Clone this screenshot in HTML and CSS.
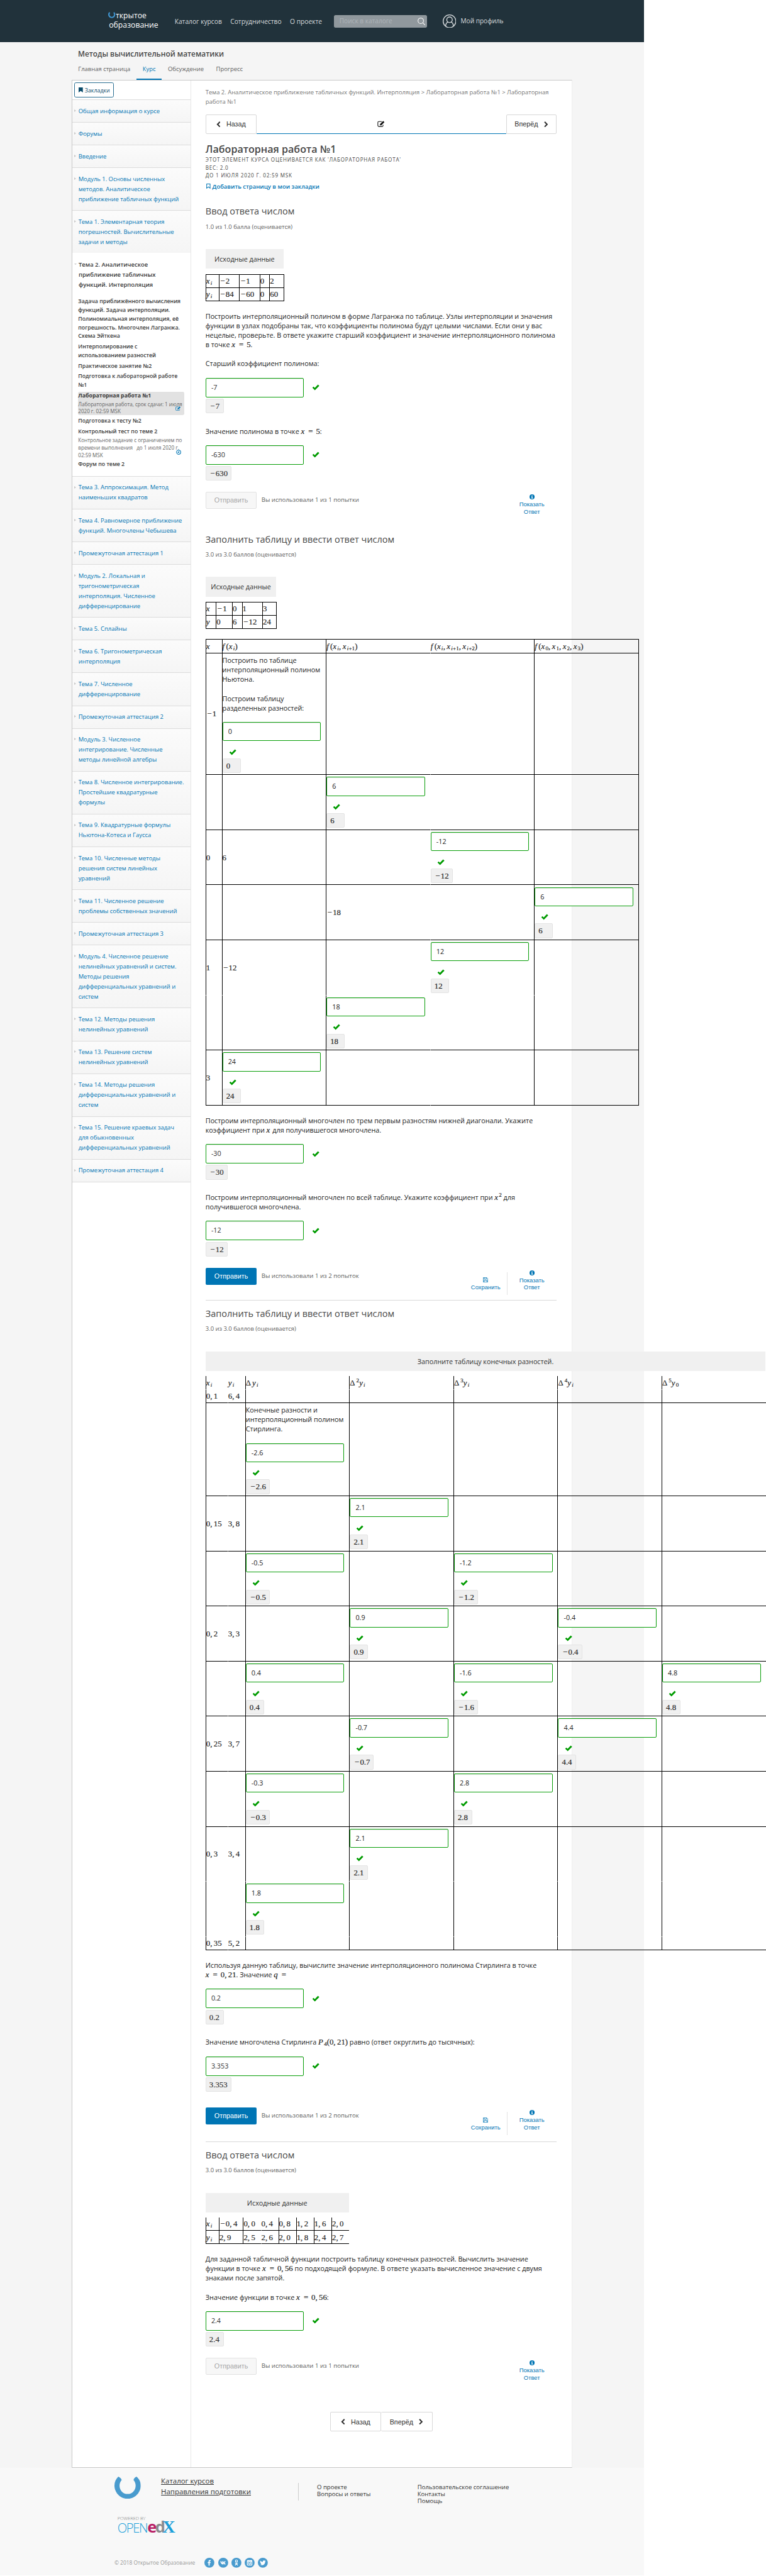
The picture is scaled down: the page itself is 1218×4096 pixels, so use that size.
FILE: index.html
```html
<!DOCTYPE html>
<html lang="ru">
<head>
<meta charset="utf-8">
<title>Лабораторная работа №1</title>
<link rel="stylesheet" href="styles.css">
</head>
<body>
<svg class="defs" width="0" height="0">
<symbol id="check" viewBox="0 0 17 14"><path d="M1 7.6 3.4 5.2 6.4 8 13.4.8 16.4 3.4 6.6 13.4z"/></symbol>
<symbol id="info" viewBox="0 0 12 12"><circle cx="6" cy="6" r="6"/><path fill="#fff" d="M5 1.8h2v1.8H5zM4.2 4.7H7v3.9h.9V10H4.2V8.600H5V6h-.8z"/></symbol>
<symbol id="save" viewBox="0 0 12 12"><path fill="none" stroke="currentColor" stroke-width="1.2" d="M.6.6h8.200l2.600 2.600v8.200H.6zM3 .6v3.600h5V.6M2.800 11.400V7h6.400v4.400"/></symbol>
<symbol id="edit" viewBox="0 0 18 15"><path fill="none" stroke="currentColor" stroke-width="1.600" d="M10.500 1.800H3.500a2.300 2.300 0 0 0-2.300 2.300v7.200a2.300 2.300 0 0 0 2.300 2.300h7.800a2.300 2.300 0 0 0 2.300-2.300V9.500"/><path fill="currentColor" d="M6.500 7.800 13.800.5l2.900 2.900-7.300 7.300H6.500z"/></symbol>
<symbol id="left" viewBox="0 0 10 14"><path fill="none" stroke="currentColor" stroke-width="3" d="M8.500 1.200 2.800 7l5.700 5.800"/></symbol>
<symbol id="right" viewBox="0 0 10 14"><path fill="none" stroke="currentColor" stroke-width="3" d="M1.500 1.200 7.200 7l-5.700 5.800"/></symbol>
<symbol id="horseshoe" viewBox="0 0 62 52"><path d="M9 0C3 6 0 13 0 21c0 17 14 31 31 31s31-14 31-31C62 13 59 6 52 0c-4 2-6 4-7 8 3 3 5 8 5 13 0 11-8 20-19 20s-19-9-19-20c0-5 2-10 5-13-1-4-4-6-8-8z"/></symbol>
</svg>
<div class="page">
<header class="top">
  <a class="logo"><svg class="logo-u"><use href="#horseshoe"/></svg><span class="l1">ткрытое</span><span class="l2">образование</span></a>
  <nav class="menu"><a>Каталог курсов</a><a>Сотрудничество</a><a>О проекте</a></nav>
  <div class="search"><span>Поиск в каталоге</span><svg viewBox="0 0 18 18"><circle cx="7.500" cy="7.500" r="6.500"/><path d="m12 12 5.500 5.500"/></svg></div>
  <div class="profile"><svg viewBox="0 0 32 32"><circle cx="16" cy="16" r="15"/><circle cx="16" cy="12.500" r="6.500"/><path d="M7 27c0-5 3-8.500 6-9.500M25 27c0-5-3-8.500-6-9.500"/></svg><span>Мой профиль</span></div>
</header>
<div class="coursehead">
  <div class="ctitle">Методы вычислительной математики</div>
  <nav class="tabs"><a>Главная страница</a><a class="on">Курс</a><a>Обсуждение</a><a>Прогресс</a></nav>
</div>
<div class="wrap">
<aside class="side">
  <div class="bm"><a><svg viewBox="0 0 10 12"><path d="M0 0h10v12L5 8 0 12z"/></svg>Закладки</a></div>
  <a class="ch">Общая информация о курсе</a>
  <a class="ch">Форумы</a>
  <a class="ch">Введение</a>
  <a class="ch">Модуль 1. Основы численных<br>методов. Аналитическое<br>приближение табличных функций</a>
  <a class="ch">Тема 1. Элементарная теория<br>погрешностей. Вычислительные<br>задачи и методы</a>
  <div class="open">
    <div class="otitle">Тема 2. Аналитическое<br>приближение табличных<br>функций. Интерполяция</div>
    <ul>
      <li>Задача приближённого вычисления<br>функций. Задача интерполяции.<br>Полиномиальная интерполяция, её<br>погрешность. Многочлен Лагранжа.<br>Схема Эйткена</li>
      <li>Интерполирование с<br>использованием разностей</li>
      <li>Практическое занятие №2</li>
      <li>Подготовка к лабораторной работе<br>№1</li>
      <li class="act"><b>Лабораторная работа №1</b><small>Лабораторная работа, срок сдачи: 1 июля<br>2020 г. 02:59 MSK</small><svg class="mark"><use href="#edit"/></svg></li>
      <li>Подготовка к тесту №2</li>
      <li>Контрольный тест по теме 2<small>Контрольное задание с ограничением по<br>времени выполнения &nbsp; до 1 июля 2020 г.<br>02:59 MSK</small><svg class="mark clock" viewBox="0 0 12 12"><circle cx="6" cy="6" r="4.900"/><path d="M6.500 3.500v3H4"/></svg></li>
      <li>Форум по теме 2</li>
    </ul>
  </div>
  <a class="ch">Тема 3. Аппроксимация. Метод<br>наименьших квадратов</a>
  <a class="ch">Тема 4. Равномерное приближение<br>функций. Многочлены Чебышева</a>
  <a class="ch">Промежуточная аттестация 1</a>
  <a class="ch">Модуль 2. Локальная и<br>тригонометрическая<br>интерполяция. Численное<br>дифференцирование</a>
  <a class="ch">Тема 5. Сплайны</a>
  <a class="ch">Тема 6. Тригонометрическая<br>интерполяция</a>
  <a class="ch">Тема 7. Численное<br>дифференцирование</a>
  <a class="ch">Промежуточная аттестация 2</a>
  <a class="ch">Модуль 3. Численное<br>интегрирование. Численные<br>методы линейной алгебры</a>
  <a class="ch">Тема 8. Численное интегрирование.<br>Простейшие квадратурные<br>формулы</a>
  <a class="ch">Тема 9. Квадратурные формулы<br>Ньютона-Котеса и Гаусса</a>
  <a class="ch">Тема 10. Численные методы<br>решения систем линейных<br>уравнений</a>
  <a class="ch">Тема 11. Численное решение<br>проблемы собственных значений</a>
  <a class="ch">Промежуточная аттестация 3</a>
  <a class="ch">Модуль 4. Численное решение<br>нелинейных уравнений и систем.<br>Методы решения<br>дифференциальных уравнений и<br>систем</a>
  <a class="ch">Тема 12. Методы решения<br>нелинейных уравнений</a>
  <a class="ch">Тема 13. Решение систем<br>нелинейных уравнений</a>
  <a class="ch">Тема 14. Методы решения<br>дифференциальных уравнений и<br>систем</a>
  <a class="ch">Тема 15. Решение краевых задач<br>для обыкновенных<br>дифференциальных уравнений</a>
  <a class="ch last">Промежуточная аттестация 4</a>
</aside>
<main class="content">
  <div class="crumbs">Тема 2. Аналитическое приближение табличных функций. Интерполяция &gt; Лабораторная работа №1 &gt; Лабораторная<br>работа №1</div>
  <div class="seq"><a class="btn"><svg><use href="#left"/></svg>Назад</a><div class="cur"><svg><use href="#edit"/></svg></div><a class="btn">Вперёд<svg><use href="#right"/></svg></a></div>
  <h1>Лабораторная работа №1</h1>
  <div class="meta">ЭТОТ ЭЛЕМЕНТ КУРСА ОЦЕНИВАЕТСЯ КАК 'ЛАБОРАТОРНАЯ РАБОТА'<br>ВЕС: 2.0<br>ДО 1 ИЮЛЯ 2020 Г. 02:59 MSK</div>
  <a class="addbm"><svg viewBox="0 0 10 12"><path d="M1 .8h8v10L5 7.500 1 10.800z"/></svg>Добавить страницу в мои закладки</a>

  <section class="prob s1">
    <h2>Ввод ответа числом</h2>
    <div class="score">1.0 из 1.0 балла (оценивается)</div>
    <div class="cap w184">Исходные данные</div>
    <table class="full w184">
      <colgroup><col class="c31"><col class="c48"><col class="c48"><col class="c23"><col class="c33"></colgroup>
      <tr class="h32"><td><span class="m"><i>x<sub>i</sub></i></span></td><td><span class="m"><s>−</s>2</span></td><td><span class="m"><s>−</s>1</span></td><td><span class="m">0</span></td><td><span class="m">2</span></td></tr>
      <tr class="h32"><td><span class="m"><i>y<sub>i</sub></i></span></td><td><span class="m"><s>−</s>84</span></td><td><span class="m"><s>−</s>60</span></td><td><span class="m">0</span></td><td><span class="m">60</span></td></tr>
    </table>
    <p>Построить интерполяционный полином в форме Лагранжа по таблице. Узлы интерполяции и значения<br>функции в узлах подобраны так, что коэффициенты полинома будут целыми числами. Если они у вас<br>нецелые, проверьте. В ответе укажите старший коэффициент и значение интерполяционного полинома<br>в точке <span class="m"><i>x</i><u>=</u>5</span>.</p>
    <p>Старший коэффициент полинома:</p>
    <div class="ans"><span class="inp">-7</span><svg class="tick"><use href="#check"/></svg></div>
    <div class="prev"><span class="m"><s>−</s>7</span></div>
    <p class="again">Значение полинома в точке <span class="m"><i>x</i><u>=</u>5</span>:</p>
    <div class="ans"><span class="inp">-630</span><svg class="tick"><use href="#check"/></svg></div>
    <div class="prev"><span class="m"><s>−</s>630</span></div>
    <div class="act-row"><a class="submit off">Отправить</a><span class="tries">Вы использовали 1 из 1 попытки</span><a class="ib"><svg><use href="#info"/></svg>Показать<br>Ответ</a></div>
  </section>

  <section class="prob s2">
    <h2>Заполнить таблицу и ввести ответ числом</h2>
    <div class="score">3.0 из 3.0 баллов (оценивается)</div>
    <div class="cap w167">Исходные данные</div>
    <table class="full w167">
      <colgroup><col class="c24"><col class="c38"><col class="c23"><col class="c48"><col class="c33"></colgroup>
      <tr class="h32"><td><span class="m"><i>x</i></span></td><td><span class="m"><s>−</s>1</span></td><td><span class="m">0</span></td><td><span class="m">1</span></td><td><span class="m">3</span></td></tr>
      <tr class="h32"><td><span class="m"><i>y</i></span></td><td><span class="m">0</span></td><td><span class="m">6</span></td><td><span class="m"><s>−</s>12</span></td><td><span class="m">24</span></td></tr>
    </table>
    <table class="full w1022">
      <colgroup><col class="c38"><col class="c246"><col class="c246"><col class="c246"><col class="c246"></colgroup>
      <tr class="h33"><td><span class="m"><i>x</i></span></td><td><span class="m"><em>f</em>(<i>x<sub>i</sub></i>)</span></td><td><span class="m"><em>f</em>(<i>x<sub>i</sub></i><q>,</q><i>x<sub>i</sub></i><sub>+1</sub>)</span></td><td class="nl"><span class="m"><em>f</em>(<i>x<sub>i</sub></i><q>,</q><i>x<sub>i</sub></i><sub>+1</sub><q>,</q><i>x<sub>i</sub></i><sub>+2</sub>)</span></td><td><span class="m"><em>f</em>(<i>x</i><sub>0</sub><q>,</q><i>x</i><sub>1</sub><q>,</q><i>x</i><sub>2</sub><q>,</q><i>x</i><sub>3</sub>)</span></td></tr>
      <tr class="h287"><td><span class="m"><s>−</s>1</span></td><td><p>Построить по таблице<br>интерполяционный полином<br>Ньютона.</p><p>Построим таблицу<br>разделенных разностей:</p><div class="cell"><span class="inp">0</span><svg class="tick"><use href="#check"/></svg><div class="prev"><span class="m">0</span></div></div></td><td></td><td class="nl"></td><td></td></tr>
      <tr class="h130"><td></td><td></td><td><div class="cell"><span class="inp">6</span><svg class="tick"><use href="#check"/></svg><div class="prev"><span class="m">6</span></div></div></td><td class="nl"></td><td></td></tr>
      <tr class="h130"><td><span class="m">0</span></td><td><span class="m">6</span></td><td></td><td class="nl"><div class="cell"><span class="inp">-12</span><svg class="tick"><use href="#check"/></svg><div class="prev"><span class="m"><s>−</s>12</span></div></div></td><td></td></tr>
      <tr class="h130"><td></td><td></td><td><span class="m"><s>−</s>18</span></td><td class="nl"></td><td><div class="cell"><span class="inp">6</span><svg class="tick"><use href="#check"/></svg><div class="prev"><span class="m">6</span></div></div></td></tr>
      <tr class="h130 nb"><td><span class="m">1</span></td><td><span class="m"><s>−</s>12</span></td><td></td><td class="nl"><div class="cell"><span class="inp">12</span><svg class="tick"><use href="#check"/></svg><div class="prev"><span class="m">12</span></div></div></td><td></td></tr>
      <tr class="h130"><td></td><td></td><td><div class="cell"><span class="inp">18</span><svg class="tick"><use href="#check"/></svg><div class="prev"><span class="m">18</span></div></div></td><td class="nl"></td><td></td></tr>
      <tr class="h130"><td><span class="m">3</span></td><td><div class="cell"><span class="inp">24</span><svg class="tick"><use href="#check"/></svg><div class="prev"><span class="m">24</span></div></div></td><td></td><td class="nl"></td><td></td></tr>
    </table>
    <p>Построим интерполяционный многочлен по трем первым разностям нижней диагонали. Укажите<br>коэффициент при <span class="m"><i>x</i></span> для получившегося многочлена.</p>
    <div class="ans"><span class="inp">-30</span><svg class="tick"><use href="#check"/></svg></div>
    <div class="prev"><span class="m"><s>−</s>30</span></div>
    <p class="again">Построим интерполяционный многочлен по всей таблице. Укажите коэффициент при <span class="m"><i>x</i><sup>2</sup></span> для<br>получившегося многочлена.</p>
    <div class="ans"><span class="inp">-12</span><svg class="tick"><use href="#check"/></svg></div>
    <div class="prev"><span class="m"><s>−</s>12</span></div>
    <div class="act-row"><a class="submit">Отправить</a><span class="tries">Вы использовали 1 из 2 попыток</span><a class="ib sv"><svg><use href="#save"/></svg>Сохранить</a><a class="ib div"><svg><use href="#info"/></svg>Показать<br>Ответ</a></div>
  </section>

  <section class="prob s3">
    <h2>Заполнить таблицу и ввести ответ числом</h2>
    <div class="score">3.0 из 3.0 баллов (оценивается)</div>
    <div class="cap w1322">Заполните таблицу конечных разностей.</div>
    <table class="w1322 rb">
      <colgroup><col class="c52"><col class="c41"><col class="c246"><col class="c246"><col class="c246"><col class="c246"><col class="c246"></colgroup>
      <tr class="h33 nb"><td><span class="m"><i>x<sub>i</sub></i></span></td><td class="nl"><span class="m"><i>y<sub>i</sub></i></span></td><td><span class="m"><b>Δ</b><i>y<sub>i</sub></i></span></td><td><span class="m"><b>Δ</b><sup>2</sup><i>y<sub>i</sub></i></span></td><td><span class="m"><b>Δ</b><sup>3</sup><i>y<sub>i</sub></i></span></td><td><span class="m"><b>Δ</b><sup>4</sup><i>y<sub>i</sub></i></span></td><td><span class="m"><b>Δ</b><sup>5</sup><i>y</i><sub>0</sub></span></td></tr>
      <tr class="h32"><td><span class="m">0<q>,</q>1</span></td><td class="nl"><span class="m">6<q>,</q>4</span></td><td></td><td></td><td></td><td></td><td></td></tr>
      <tr class="h219"><td></td><td class="nl"></td><td><p>Конечные разности и<br>интерполяционный полином<br>Стирлинга.</p><div class="cell"><span class="inp">-2.6</span><svg class="tick"><use href="#check"/></svg><div class="prev"><span class="m"><s>−</s>2.6</span></div></div></td><td></td><td></td><td></td><td></td></tr>
      <tr class="h130"><td><span class="m">0<q>,</q>15</span></td><td class="nl"><span class="m">3<q>,</q>8</span></td><td></td><td><div class="cell"><span class="inp">2.1</span><svg class="tick"><use href="#check"/></svg><div class="prev"><span class="m">2.1</span></div></div></td><td></td><td></td><td></td></tr>
      <tr class="h130"><td></td><td class="nl"></td><td><div class="cell"><span class="inp">-0.5</span><svg class="tick"><use href="#check"/></svg><div class="prev"><span class="m"><s>−</s>0.5</span></div></div></td><td></td><td><div class="cell"><span class="inp">-1.2</span><svg class="tick"><use href="#check"/></svg><div class="prev"><span class="m"><s>−</s>1.2</span></div></div></td><td></td><td></td></tr>
      <tr class="h130"><td><span class="m">0<q>,</q>2</span></td><td class="nl"><span class="m">3<q>,</q>3</span></td><td></td><td><div class="cell"><span class="inp">0.9</span><svg class="tick"><use href="#check"/></svg><div class="prev"><span class="m">0.9</span></div></div></td><td></td><td><div class="cell"><span class="inp">-0.4</span><svg class="tick"><use href="#check"/></svg><div class="prev"><span class="m"><s>−</s>0.4</span></div></div></td><td></td></tr>
      <tr class="h130"><td></td><td class="nl"></td><td><div class="cell"><span class="inp">0.4</span><svg class="tick"><use href="#check"/></svg><div class="prev"><span class="m">0.4</span></div></div></td><td></td><td><div class="cell"><span class="inp">-1.6</span><svg class="tick"><use href="#check"/></svg><div class="prev"><span class="m"><s>−</s>1.6</span></div></div></td><td></td><td><div class="cell"><span class="inp">4.8</span><svg class="tick"><use href="#check"/></svg><div class="prev"><span class="m">4.8</span></div></div></td></tr>
      <tr class="h130"><td><span class="m">0<q>,</q>25</span></td><td class="nl"><span class="m">3<q>,</q>7</span></td><td></td><td><div class="cell"><span class="inp">-0.7</span><svg class="tick"><use href="#check"/></svg><div class="prev"><span class="m"><s>−</s>0.7</span></div></div></td><td></td><td><div class="cell"><span class="inp">4.4</span><svg class="tick"><use href="#check"/></svg><div class="prev"><span class="m">4.4</span></div></div></td><td></td></tr>
      <tr class="h130"><td></td><td class="nl"></td><td><div class="cell"><span class="inp">-0.3</span><svg class="tick"><use href="#check"/></svg><div class="prev"><span class="m"><s>−</s>0.3</span></div></div></td><td></td><td><div class="cell"><span class="inp">2.8</span><svg class="tick"><use href="#check"/></svg><div class="prev"><span class="m">2.8</span></div></div></td><td></td><td></td></tr>
      <tr class="h130 nb"><td><span class="m">0<q>,</q>3</span></td><td class="nl"><span class="m">3<q>,</q>4</span></td><td></td><td><div class="cell"><span class="inp">2.1</span><svg class="tick"><use href="#check"/></svg><div class="prev"><span class="m">2.1</span></div></div></td><td></td><td></td><td></td></tr>
      <tr class="h130 nb"><td></td><td class="nl"></td><td><div class="cell"><span class="inp">1.8</span><svg class="tick"><use href="#check"/></svg><div class="prev"><span class="m">1.8</span></div></div></td><td></td><td></td><td></td><td></td></tr>
      <tr class="h32"><td><span class="m">0<q>,</q>35</span></td><td class="nl"><span class="m">5<q>,</q>2</span></td><td></td><td></td><td></td><td></td><td></td></tr>
    </table>
    <p>Используя данную таблицу, вычислите значение интерполяционного полинома Стирлинга в точке<br><span class="m"><i>x</i><u>=</u>0<q>,</q>21</span>. Значение <span class="m"><i>q</i><u>=</u></span></p>
    <div class="ans"><span class="inp">0.2</span><svg class="tick"><use href="#check"/></svg></div>
    <div class="prev"><span class="m">0.2</span></div>
    <p class="again">Значение многочлена Стирлинга <span class="m"><i>P</i><sub>4</sub>(0<q>,</q>21)</span> равно (ответ округлить до тысячных):</p>
    <div class="ans"><span class="inp">3.353</span><svg class="tick"><use href="#check"/></svg></div>
    <div class="prev"><span class="m">3.353</span></div>
    <div class="act-row late"><a class="submit">Отправить</a><span class="tries">Вы использовали 1 из 2 попыток</span><a class="ib sv"><svg><use href="#save"/></svg>Сохранить</a><a class="ib div"><svg><use href="#info"/></svg>Показать<br>Ответ</a></div>
  </section>

  <section class="prob s4">
    <h2>Ввод ответа числом</h2>
    <div class="score">3.0 из 3.0 баллов (оценивается)</div>
    <div class="cap w338">Исходные данные</div>
    <table class="w338">
      <colgroup><col class="c31"><col class="c57"><col class="c42"><col class="c41"><col class="c42"><col class="c42"><col class="c42"><col class="c41"></colgroup>
      <tr class="h32"><td><span class="m"><i>x<sub>i</sub></i></span></td><td><span class="m"><s>−</s>0<q>,</q>4</span></td><td><span class="m">0<q>,</q>0</span></td><td class="nl"><span class="m">0<q>,</q>4</span></td><td><span class="m">0<q>,</q>8</span></td><td><span class="m">1<q>,</q>2</span></td><td><span class="m">1<q>,</q>6</span></td><td><span class="m">2<q>,</q>0</span></td></tr>
      <tr class="h32"><td><span class="m"><i>y<sub>i</sub></i></span></td><td><span class="m">2<q>,</q>9</span></td><td><span class="m">2<q>,</q>5</span></td><td class="nl"><span class="m">2<q>,</q>6</span></td><td><span class="m">2<q>,</q>0</span></td><td><span class="m">1<q>,</q>8</span></td><td><span class="m">2<q>,</q>4</span></td><td><span class="m">2<q>,</q>7</span></td></tr>
    </table>
    <p>Для заданной табличной функции построить таблицу конечных разностей. Вычислить значение<br>функции в точке <span class="m"><i>x</i><u>=</u>0<q>,</q>56</span> по подходящей формуле. В ответе указать вычисленное значение с двумя<br>знаками после запятой.</p>
    <p>Значение функции в точке <span class="m"><i>x</i><u>=</u>0<q>,</q>56</span>:</p>
    <div class="ans"><span class="inp">2.4</span><svg class="tick"><use href="#check"/></svg></div>
    <div class="prev"><span class="m">2.4</span></div>
    <div class="act-row"><a class="submit off">Отправить</a><span class="tries">Вы использовали 1 из 1 попытки</span><a class="ib"><svg><use href="#info"/></svg>Показать<br>Ответ</a></div>
  </section>
  <div class="botnav"><a class="btn"><svg><use href="#left"/></svg>Назад</a><a class="btn">Вперёд<svg><use href="#right"/></svg></a></div>
</main>
</div>
<footer class="foot">
  <div class="frow">
    <svg class="fu"><use href="#horseshoe"/></svg>
    <div class="fmain"><a>Каталог курсов</a><a>Направления подготовки</a></div>
    <div class="fcol f1">О проекте<br>Вопросы и ответы</div>
    <div class="fcol">Пользовательское соглашение<br>Контакты<br>Помощь</div>
  </div>
  <div class="edx"><div class="pow">POWERED BY</div><div class="word"><span class="op">OPEN</span><span class="e">e</span><span class="d">d</span><span class="x">X</span></div></div>
  <div class="copy"><span>© 2018 Открытое Образование</span>
    <svg viewBox="0 0 24 24"><circle cx="12" cy="12" r="12"/><path class="w" d="M10 19v-6H8v-2.500h2V9c0-2.500 1.300-3.700 3.500-3.700h1.700v2.500h-1.300c-.9 0-1.200.4-1.200 1.200v1.500h2.400L14.800 13h-2.100v6z"/></svg>
    <svg viewBox="0 0 24 24"><circle cx="12" cy="12" r="12"/><path class="w" d="M5 8.500h2.500c.5 2 1.300 3.300 2.200 4V8.500h3v3c1-.5 1.900-1.700 2.500-3h2.600c-.5 1.500-1.500 2.900-2.700 3.800 1.300.9 2.300 2 3 3.700h-3c-.6-1.200-1.400-2-2.400-2.500V16h-1.500C8 16 5.800 13.500 5 8.500z"/></svg>
    <svg viewBox="0 0 24 24"><circle cx="12" cy="12" r="12"/><circle class="k" cx="12" cy="7.800" r="2.500"/><path class="k" d="M8.500 12.300c2.200 1.600 4.800 1.600 7 0M12 13.500l-3 5M12 13.500l3 5"/></svg>
    <svg viewBox="0 0 24 24"><circle cx="12" cy="12" r="12"/><rect class="k" x="6.500" y="6.500" width="11" height="11" rx="1"/><circle class="k" cx="12" cy="12.500" r="2.600"/><path class="w" d="M6 6h12v3.500h-3c-2-1.500-4-1.500-6 0H6z"/></svg>
    <svg viewBox="0 0 24 24"><circle cx="12" cy="12" r="12"/><path class="w" d="M5.500 7c2 2 4 3 6.300 3.100-.3-2.300 1-3.800 2.900-3.800 1 0 1.600.4 2.200.9l1.900-.6-1.200 1.700 1.400-.3-1.400 1.600c.2 5-3.500 8.400-7.700 8.400-1.700 0-3.200-.4-4.400-1.200 1.500.1 2.900-.3 3.900-1.100-1.400-.1-2.200-.9-2.600-2h1.100c-1.400-.5-2.200-1.500-2.200-2.900l1.100.4C5.500 10 5 8.500 5.500 7z"/></svg>
  </div>
</footer>
</div>
</body>
</html>
```
FILE: styles.css
```css
* { box-sizing: border-box; }
html { background: #fff; overflow: hidden; }
body { margin: 0; zoom: .6739; font: 16px/22.4px "Open Sans", "Noto Sans", sans-serif; color: #313131; }
.defs { display: block; position: absolute; }
svg { flex: none; }
h1, h2, p, ul { margin: 0; padding: 0; font-weight: 400; }
.page { width: 1520px; height: 6077px; background: #f5f5f5; }

/* header */
.top { height: 100px; background: #21323b; color: #d9dddf; display: flex; align-items: center; padding-left: 255px; }
.logo { display: grid; grid-template: 21px 22px / 18px 139px; width: 157px; color: #fff; font-size: 18.200px; line-height: 20px; }
.logo-u { width: 17px; height: 15px; fill: #3f94ce; }
.l2 { grid-column: 1 / 3; padding-left: 2px; }
.l1 { line-height: 19px; }
.menu { display: flex; gap: 20px; width: 376px; font-size: 15.200px; white-space: nowrap; padding-top: 2px; }
.search { width: 220px; height: 30px; border-radius: 4px; background: #90989d; display: flex; align-items: center; justify-content: space-between; padding: 0 5px 0 13px; font-size: 15px; color: #aeb5ba; }
.search svg { width: 18px; height: 18px; fill: none; stroke: #fff; stroke-width: 1.500; }
.profile { display: flex; align-items: center; gap: 11px; margin-left: 36px; font-size: 15px; }
.profile svg { width: 32px; height: 32px; fill: none; stroke: #d9dddf; stroke-width: 2; }

/* course head */
.coursehead { height: 88px; padding: 14px 0 0 184px; }
.ctitle { font-size: 17.600px; line-height: 26px; color: #474747; font-weight: 600; }
.tabs { display: flex; margin: 8px 0 0 -14px; font-size: 14px; line-height: 30px; color: #5e5e5e; }
.tabs a { height: 40px; padding: 0 14.500px; }
.tabs .on { color: #0075b4; border-bottom: 4px solid #0075b4; }

.wrap { display: flex; width: 1181px; height: 5635px; margin-left: 169px; background: #fff; border: 1px solid #c8c8c8; border-right-color: #eee; }

/* sidebar */
.side { flex: none; width: 280px; border-right: 1px solid #e7e7e7; }
.bm { height: 45px; padding: 5px 4px; }
.bm a { display: flex; align-items: center; gap: 4px; width: 94px; height: 36px; padding-left: 10px; border: 1px solid #2b6f92; border-radius: 4px; color: #0b4c6b; font-size: 13.200px; }
.bm svg { width: 10px; height: 12px; fill: #0b4c6b; }
.ch { display: block; position: relative; border-top: 1px solid #dcdcdc; padding: 14.200px 0 14.070px 14.500px; background: linear-gradient(#fbfbfb, #f5f5f5); color: #0075b4; font-size: 14px; line-height: 23.800px; white-space: nowrap; }
.ch.last { border-bottom: 1px solid #dcdcdc; }
.ch::before { content: ""; position: absolute; left: 4px; top: 22px; border: 4px solid transparent; border-left: 5px solid #c9c9c9; border-right: 0; }
.open { height: 526px; padding: 15px 14px 0 14px; white-space: nowrap; }
.otitle { position: relative; padding-left: 1px; font-size: 14px; line-height: 23.800px; font-weight: 600; color: #3a3a3a; margin-bottom: 18.500px; }
.otitle::before { content: ""; position: absolute; left: -10px; top: 10px; border: 4px solid transparent; border-top: 4px solid #c9c9c9; border-bottom: 0; }
.open ul { list-style: none; }
.open li { position: relative; margin-bottom: 4.300px; font-size: 13px; line-height: 20.500px; font-weight: 600; color: #3a3a3a; }
.open small { display: block; font-size: 12px; line-height: 17.700px; font-weight: 400; color: #666; }
.act { background: #e2e2e2; border-radius: 4px; }
.act b { font-weight: 700; }
.mark { position: absolute; right: 8px; bottom: 11px; width: 13px; height: 11px; color: #0075b4; }
.clock { bottom: 9px; width: 12px; height: 12px; fill: none; stroke: #0075b4; stroke-width: 1.600; }

/* content */
.content { flex: none; width: 900px; padding: 19px 0 0 34.500px; }
.crumbs { height: 62px; font-size: 14px; line-height: 21px; color: #777; white-space: nowrap; }
.seq { display: flex; width: 829px; height: 45px; }
.btn { display: flex; align-items: center; justify-content: center; gap: 14px; width: 120px; border: 1px solid #d8d8d8; border-radius: 3px; font: 16px "Liberation Sans", Arial, sans-serif; color: #313131; }
.btn svg { width: 10px; height: 14px; }
.cur { flex: 1; display: flex; align-items: center; justify-content: center; border-bottom: 2px solid #0075b4; }
.cur svg { width: 18px; height: 15px; color: #111; }
h1 { margin-top: 22px; height: 30px; font-size: 23.900px; line-height: 30px; font-weight: 600; color: #474747; white-space: nowrap; }
.meta { font-size: 12px; line-height: 19.200px; letter-spacing: 1.180px; color: #474747; margin-bottom: 5px; white-space: nowrap; }
.addbm { display: flex; align-items: center; gap: 4px; height: 20px; padding-left: 2px; font-size: 14px; font-weight: 600; color: #0075b4; }
.addbm svg { width: 10px; height: 12px; fill: none; stroke: #0075b4; stroke-width: 1.500; }

.prob { width: 829px; white-space: nowrap; }
.s1 { height: 773.300px; margin-top: 18.500px; }
.s2 { height: 1827px; border-bottom: 1px solid #d9d9d9; }
.s3 { height: 1985.500px; border-bottom: 1px solid #d9d9d9; }
.s4 { height: 637.300px; }
h2 { padding-top: 16px; font-size: 21.500px; line-height: 30px; color: #474747; }
.score { margin: 11px 0 42.500px; font-size: 14px; line-height: 20px; color: #5e5e5e; }
.cap { height: 46.400px; line-height: 46.400px; margin-bottom: 12px; background: #f0f0f0; text-align: center; }
.prob p { margin-bottom: 22.400px; }
.prob > p { color: #222; }
.prob p.again { margin-top: 30.500px; }
.ans { display: flex; align-items: center; gap: 19px; }
.inp { display: block; width: 232.500px; height: 46px; border: 2px solid #0a9f0a; border-radius: 3px; background: #fff; padding-left: 12px; line-height: 42px; font-size: 16px; box-shadow: inset 0 1px 2px #e0e0e0; }
.tick { display: block; width: 18px; height: 15px; fill: #009b00; }
.prev { width: max-content; min-width: 43px; height: 34.500px; margin-top: 3.500px; padding: 0 7.500px; border: 1px solid #e4e4e4; border-radius: 3px; background: #f0f0f0; line-height: 32px; }

table { border-spacing: 0; table-layout: fixed; margin-bottom: 23.700px; color: #222; }
td { padding: 0; border-left: 1px solid #000; border-bottom: 1px solid #000; vertical-align: middle; }
td.nl { border-left-color: transparent; }
.nb td { border-bottom-color: transparent; }
.full { border-top: 1px solid #000; border-right: 1px solid #000; }
.rb { border-right: 1px solid #000; }
.w184 { width: 184px; } .w167 { width: 167px; } .w338 { width: 338px; }
.w1022 { width: 1022.500px; } .w1322 { width: 1321.500px; }
.c23 { width: 23px; } .c24 { width: 24.400px; } .c31 { width: 31.300px; } .c33 { width: 33px; } .c38 { width: 38.300px; }
.c41 { width: 41.500px; } .c42 { width: 41.800px; } .c48 { width: 48.200px; } .c52 { width: 52px; } .c57 { width: 57.200px; } .c246 { width: 245.700px; }
.h32 { height: 31.500px; } .h33 { height: 32.200px; } .h130 { height: 130px; } .h219 { height: 220px; } .h287 { height: 287px; }
td p { margin-top: 5px; }
td .inp { height: 45px; line-height: 41px; margin-top: 4.500px; }
td p + .cell .inp { margin-top: 0; }
td .tick { margin: 18.500px 0 7.500px 15px; }
td .prev { height: 34.500px; margin: 0 0 3.500px; }
td p + p { margin-top: 0; }

/* formulas */
.m { font: 19px/18px "Liberation Serif", "Times New Roman", serif; white-space: nowrap; -webkit-text-stroke: .25px; }
.m i { letter-spacing: 1.800px; }
.m i sub { letter-spacing: .5px; }
.m em { letter-spacing: 3.500px; }
.m b { font-weight: 400; letter-spacing: 3px; }
.m s { display: inline-block; width: .78em; text-align: center; text-decoration: none; }
.m u { display: inline-block; width: 1.330em; text-align: center; text-decoration: none; }
.m q { display: inline-block; width: .44em; quotes: none; }
.m q::before, .m q::after { content: none; }
.m sub, .m sup { font-size: 13.500px; line-height: 0; }
.m sub { vertical-align: -3px; }
.m sup { vertical-align: 8px; }

/* actions */
.act-row { display: flex; margin-top: 26px; height: 70px; }
.act-row.late { margin-top: 37px; }
.submit { width: 121px; height: 40px; border-radius: 3px; background: #0075b4; color: #fff; text-align: center; font: 16px/39px "Liberation Sans", Arial, sans-serif; }
.submit.off { background: #f7f7f7; border: 1px solid #e2e2e2; color: #a8a8a8; line-height: 37px; }
.tries { flex: 1; padding-left: 11px; font-size: 14.300px; line-height: 40px; color: #5e5e5e; }
.ib { width: 118px; text-align: center; padding-top: 6px; font: 14px/17px "Liberation Sans", Arial, sans-serif; color: #0075b4; }
.ib svg { display: block; width: 12px; height: 12px; margin: 0 auto 3px; fill: #0075b4; }
.ib.sv { width: 100px; padding-top: 23px; }
.ib.div { position: relative; }
.ib.div::before { content: ""; position: absolute; left: 0; top: 11px; height: 54px; border-left: 1px solid #e3e3e3; }
.botnav { display: flex; width: 242px; height: 45px; margin-left: 293.500px; }
.botnav .btn { width: 121px; }
.botnav .btn + .btn { border-left: 0; }

/* footer */
.foot { height: 254px; background: #f8f8f8; padding: 20px 0 0 270px; }
.frow { display: flex; height: 94px; }
.fu { width: 62px; height: 52px; fill: #499bce; }
.fmain { display: flex; flex-direction: column; gap: 4px; margin-left: 48px; width: 325px; font-size: 17px; text-decoration: underline; white-space: nowrap; position: relative; }
.fmain a { line-height: 22px; }
.fmain::after { content: ""; position: absolute; right: 0; top: 15px; height: 42px; border-left: 1px solid #ccc; }
.fcol { font-size: 14.200px; line-height: 16px; padding-top: 19px; white-space: nowrap; }
.f1 { margin-left: 43px; width: 237px; }
.edx { padding-left: 7px; height: 96px; color: #777; }
.pow { font-size: 11px; line-height: 10px; font-weight: 300; }
.word { display: flex; align-items: baseline; line-height: 30px; }
.op { font: 300 30px/30px "Open Sans", sans-serif; color: #1c9fd9; letter-spacing: -2px; }
.e { font: 700 38px/30px "Open Sans", sans-serif; color: #b81f66; }
.d { font: 700 38px/30px "Open Sans", sans-serif; color: #8a8c8f; margin-left: -4px; }
.x { font: 700 42px/30px "Liberation Serif", serif; color: #1c9fd9; margin-left: -7px; }
.copy { display: flex; align-items: center; gap: 8px; height: 28px; font-size: 12.500px; color: #999; }
.copy span { width: 205px; white-space: nowrap; }
.copy svg { width: 23.500px; height: 23.500px; fill: #499bce; }
.copy .w { fill: #fff; }
.copy .k { fill: none; stroke: #fff; stroke-width: 1.800; }
```
